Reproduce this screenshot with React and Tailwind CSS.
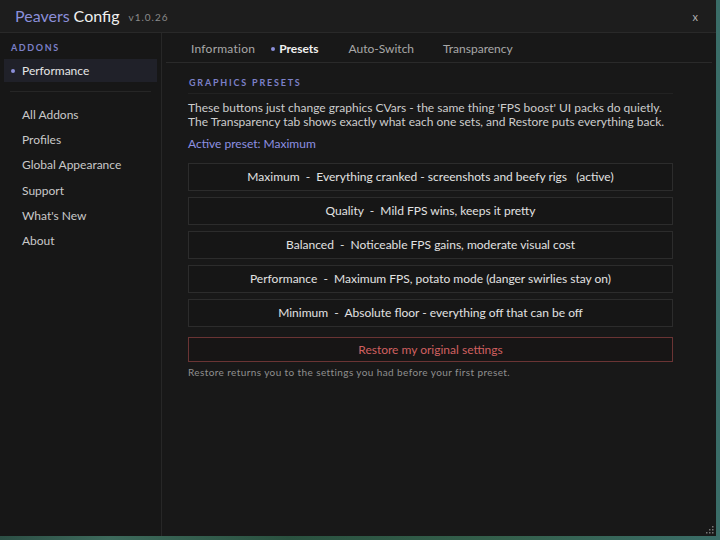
import React from "react";

const presets = [
  "Maximum  -  Everything cranked - screenshots and beefy rigs   (active)",
  "Quality  -  Mild FPS wins, keeps it pretty",
  "Balanced  -  Noticeable FPS gains, moderate visual cost",
  "Performance  -  Maximum FPS, potato mode (danger swirlies stay on)",
  "Minimum  -  Absolute floor - everything off that can be off",
];

const navItems = ["All Addons", "Profiles", "Global Appearance", "Support", "What's New", "About"];

export default function App() {
  return (
    <div
      className="relative w-[720px] h-[540px] overflow-hidden bg-[linear-gradient(90deg,#2c4f45_0%,#3d6a5c_15%,#2a5240_40%,#34604c_70%,#3a6d68_100%)]"
      style={{ fontFamily: "Lato, 'Open Sans', sans-serif" }}
    >
      <div className="w-[716px] h-[536px] flex flex-col bg-[#181818] relative">
        {/* Title bar */}
        <div className="h-[33px] shrink-0 flex items-center px-[15px] bg-[#1d1d1d] border-b border-[#292929]">
          <span className="text-[16px] text-[#8b8fd9] leading-none">Peavers</span>
          <span className="text-[16px] text-[#f0f0f0] leading-none ml-[4px]">Config</span>
          <span className="text-[10px] text-[#8a8a8a] tracking-[0.1em] ml-[9px] mt-[2px] leading-none">v1.0.26</span>
          <span className="ml-auto mr-[3px] text-[11px] text-[#b0b0b0] leading-none">x</span>
        </div>
        <div className="flex flex-1 min-h-0">
          {/* Sidebar */}
          <div className="w-[162px] shrink-0 border-r border-[#272727] bg-[#171717] flex flex-col">
            <div className="pt-[10px] pl-[11px] text-[9px] font-bold tracking-[0.18em] text-[#7c80c8] leading-[10px]">ADDONS</div>
            <div className="mt-[6px] mx-[4px] h-[23px] bg-[#202129] flex items-center pl-[7px]">
              <span className="w-[4px] h-[4px] rounded-full bg-[#8b8fd9]"></span>
              <span className="ml-[7px] text-[12px] text-[#e6e6e6]">Performance</span>
            </div>
            <div className="mt-[9px] mx-[10px] border-t border-[#262626]"></div>
            <div className="flex flex-col mt-[10px]">
              {navItems.map((n) => (
                <div key={n} className="h-[25.3px] flex items-center pl-[22px] text-[12px] text-[#c9c9c9]">
                  {n}
                </div>
              ))}
            </div>
          </div>
          {/* Main */}
          <div className="flex-1 flex flex-col">
            <div className="h-[30px] mx-[4px] border-b border-[#2a2a2a] flex items-center text-[12px] pt-[2px]">
              <span className="ml-[25px] text-[#a8a8a8] tracking-[0.02em]">Information</span>
              <span className="ml-[16px] flex items-center text-[#f0f0f0] font-bold">
                <span className="w-[4px] h-[4px] rounded-full bg-[#8b8fd9] mr-[4px]"></span>Presets
              </span>
              <span className="ml-[30px] text-[#a8a8a8]">Auto-Switch</span>
              <span className="ml-[29px] text-[#a8a8a8]">Transparency</span>
            </div>
            <div className="pl-[26px] pr-[43px]">
              <div className="mt-[15px] text-[9px] font-bold tracking-[0.2em] text-[#7c80c8] leading-[10px] pl-[1px]">GRAPHICS PRESETS</div>
              <div className="mt-[5px] border-t border-[#222222]"></div>
              <div className="mt-[7px] text-[12px] leading-[14px] text-[#cdcdcd]">
                These buttons just change graphics CVars - the same thing 'FPS boost' UI packs do quietly.
                <br />
                The Transparency tab shows exactly what each one sets, and Restore puts everything back.
              </div>
              <div className="mt-[8px] text-[12px] text-[#8d90e2] leading-[14px]">Active preset: Maximum</div>
              <div className="mt-[12px] flex flex-col gap-[6px]">
                {presets.map((p) => (
                  <div
                    key={p}
                    className="h-[28px] border border-[#2c2c2c] bg-[#161616] flex items-center justify-center text-[12px] text-[#e2e2e2] whitespace-pre"
                  >
                    {p}
                  </div>
                ))}
              </div>
              <div className="mt-[10px] h-[25px] border border-[#6a3434] bg-[#171515] flex items-center justify-center text-[12px] text-[#d06060]">
                Restore my original settings
              </div>
              <div className="mt-[3px] text-[10px] tracking-[0.04em] text-[#8f8f8f]">
                Restore returns you to the settings you had before your first preset.
              </div>
            </div>
          </div>
        </div>
        {/* resize grip */}
        <div className="absolute right-[2px] bottom-[2px] w-[8px] h-[8px]">
          <svg width="8" height="8" viewBox="0 0 8 8">
            <rect x="6" y="0" width="1.5" height="1.5" fill="#777" />
            <rect x="3" y="3" width="1.5" height="1.5" fill="#777" />
            <rect x="6" y="3" width="1.5" height="1.5" fill="#777" />
            <rect x="0" y="6" width="1.5" height="1.5" fill="#777" />
            <rect x="3" y="6" width="1.5" height="1.5" fill="#777" />
            <rect x="6" y="6" width="1.5" height="1.5" fill="#777" />
          </svg>
        </div>
      </div>
    </div>
  );
}
